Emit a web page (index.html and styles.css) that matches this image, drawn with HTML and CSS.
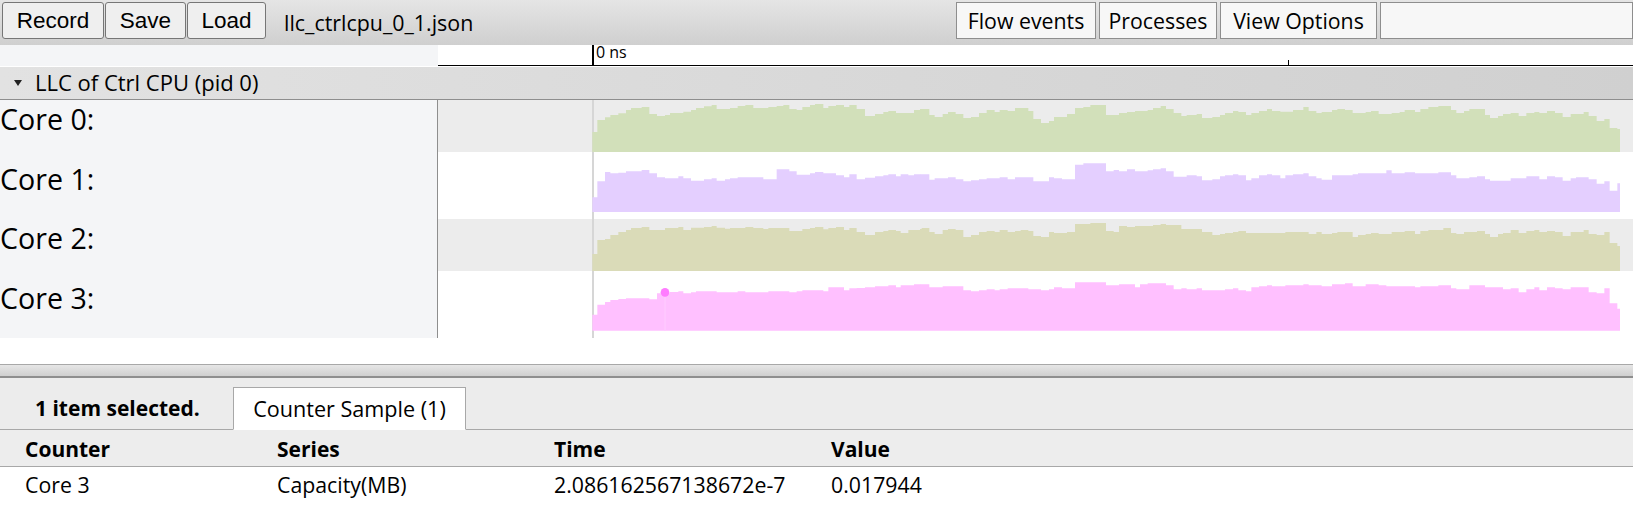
FILE: index.html
```html
<!DOCTYPE html>
<html lang="en">
<head>
<meta charset="utf-8">
<title>llc_ctrlcpu_0_1.json</title>
<link rel="stylesheet" href="styles.css">
</head>
<body>
<header class="toolbar">
  <div class="btn-group">
    <button class="btn">Record</button>
    <button class="btn btn-save">Save</button>
    <button class="btn btn-load">Load</button>
  </div>
  <span class="filename">llc_ctrlcpu_0_1.json</span>
  <div class="options">
    <button class="opt opt-flow">Flow events</button>
    <button class="opt opt-proc">Processes</button>
    <button class="opt opt-view">View Options</button>
    <div class="search"></div>
  </div>
</header>
<section class="ruler">
  <div class="ruler-side"></div>
  <div class="ruler-scale">
    <div class="ruler-zero"><span class="ruler-label">0 ns</span></div>
    <span class="ruler-tick"></span>
  </div>
</section>
<section class="process">
  <span class="triangle"></span>
  <span class="process-title">LLC of Ctrl CPU (pid 0)</span>
</section>
<section class="tracks">
  <div class="labels">
    <div class="label">Core 0:</div>
    <div class="label">Core 1:</div>
    <div class="label">Core 2:</div>
    <div class="label">Core 3:</div>
  </div>
  <div class="lanes">
    <div class="lane lane-a"></div>
    <div class="lane lane-b"></div>
    <div class="lane lane-c"></div>
    <div class="lane lane-d"></div>
    <span class="zero-line"></span>
    <svg class="charts" viewBox="0 0 3585 714" width="1195" height="238" aria-hidden="true">
      <g transform="translate(366 -30)">
        <g class="green">
          <path d="M97 186V126H112V90H135V82H151V75H175V70H198V60H213V54H245V51H268V72H291V78H315V75H330V69H370V65H393V60H408V54H432V49H455V45H470V57H510V54H533V48H556V45H580V54H625V51H650V48H670V45H688V57H710V60H727V51H750V45H765V42H790V54H805V48H828V45H852V51H868V45H890V57H915V78H945V72H970V66H985V63H1008V69H1062V60H1081V186Z"/>
          <path transform="translate(1080 0)" d="M0 186V57H28V75H44V81H68V72H84V66H107V72H130V84H153V81H177V69H200V60H224V66H239V60H263V63H285V54H325V63H340V87H363V99H387V93H402V81H441V72H465V54H490V51H511V45H558V75H597V69H621V66H645V63H683V60H699V54H722V48H738V57H761V69H784V78H800V75H830V72H846V84H877V81H900V75H915V69H939V63H955V66H978V75H994V69H1017V63H1041V57H1056V63H1081V186Z"/>
          <path transform="translate(2160 0)" d="M0 186V65H39V60H70V51H86V63H109V69H125V66H156V60H172V57H195V60H218V69H257V66H273V63H296V72H335V69H359V66H374V60H405V66H421V57H445V51H475V48H513V60H529V69H552V63H568V57H615V75H630V84H654V78H669V72H692V69H716V78H739V69H763V66H778V69H801V63H825V69H848V81H872V72H911V66H926V78H950V93H973V87H989V114H1012V117H1020V186Z"/>
        </g>
        <g class="purple">
          <path d="M97 366V322H112V274H135V246H151V250H175V248H198V244H245V240H268V250H291V262H315V265H355V259H370V265H393V272H432V268H455V265H470V272H495V268H510V265H533V262H610V268H650V238H688V244H710V254H750V250H765V246H790V250H828V256H852V262H868V253H890V268H915V263H945V259H970V256H985V253H1008V259H1022V253H1045V256H1062V253H1081V366Z"/>
          <path transform="translate(1080 0)" d="M0 366V253H28V269H44V265H84V262H107V268H130V274H153V271H177V268H200V265H239V262H263V268H285V262H340V274H387V262H402V265H426V268H465V224H490V220H558V244H581V240H597V244H621V238H645V244H683V241H699V238H722V235H738V244H761V260H800V256H830V259H846V271H877V268H900V259H915V256H939V253H955V256H978V271H994V265H1017V256H1041V253H1056V256H1081V366Z"/>
          <path transform="translate(2160 0)" d="M0 366V265H16V256H39V253H70V250H86V259H109V265H125V269H156V256H218V253H234V250H319V241H335V250H374V247H405V250H475V247H513V256H529V265H568V262H591V259H615V268H630V272H692V265H739V259H778V268H801V259H825V262H848V272H872V265H888V262H926V268H950V281H973V274H989V302H1012V280H1020V366Z"/>
        </g>
        <g class="olive" transform="translate(0 360)">
          <path d="M97 183V132H112V90H135V87H151V75H175V66H198V60H213V54H245V51H268V60H315V54H355V51H370V60H393V53H432V51H455V48H470V53H495V56H510V54H556V51H580V54H610V57H625V54H688V63H727V57H750V54H765V51H790V58H805V54H828V51H852V60H868V54H890V66H915V75H945V66H970V63H985V60H1008V63H1022V69H1045V60H1081V183Z"/>
          <path transform="translate(1080 0)" d="M0 183V57H5V54H28V66H44V72H68V60H84V57H107V60H130V81H153V75H177V66H200V63H224V66H239V60H263V66H285V63H302V60H325V63H340V78H363V81H387V66H402V69H441V66H465V42H511V39H558V63H581V66H597V48H621V51H645V48H699V45H722V42H738V45H784V57H846V66H877V75H900V72H915V69H939V66H955V63H978V69H1081V183Z"/>
          <path transform="translate(2160 0)" d="M0 183V69H16V66H86V72H109V66H125V72H156V69H172V66H218V81H234V75H257V72H273V69H296V72H335V66H374V63H405V72H421V63H445V60H490V54H513V69H529V72H552V66H591V63H615V72H630V81H654V72H669V69H692V60H716V69H739V63H763V60H778V66H801V63H825V66H848V78H872V66H911V60H926V72H950V75H973V66H989V99H1012V108H1020V183Z"/>
        </g>
        <g class="pink" transform="translate(0 360)">
          <path d="M97 362V314H112V284H135V276H151V270H175V267H198V265H268V268H291V250H330V246H355V244H370V250H393V247H408V244H470V247H533V244H556V247H625V244H688V247H710V244H727V241H790V244H805V232H852V241H868V235H890V234H915V232H945V229H985V226H1008V232H1022V226H1062V223H1081V362Z"/>
          <path transform="translate(1080 0)" d="M0 362V223H28V232H68V229H130V241H153V244H177V241H200V238H224V241H239V238H263V235H325V238H363V241H387V238H402V232H426V235H465V217H558V226H597V223H645V232H660V223H683V220H738V226H761V238H784V235H800V238H830V235H846V241H915V238H939V235H955V241H978V244H994V232H1017V229H1041V226H1056V229H1081V362Z"/>
          <path transform="translate(2160 0)" d="M0 362V229H16V226H70V223H86V226H125V229H156V223H195V220H218V229H257V223H296V226H319V229H405V232H421V229H475V226H513V235H529V238H568V226H615V232H669V238H692V235H716V247H739V238H763V232H778V241H801V232H825V235H848V238H872V232H926V247H950V250H973V235H989V280H1012V296H1020V362Z"/>
          <path class="stem" d="M313 260H317V362H313Z"/>
          <circle class="dot" cx="315" cy="247" r="13"/>
        </g>
      </g>
    </svg>
  </div>
</section>
<div class="spacer"></div>
<div class="drag-handle"></div>
<section class="panel">
  <div class="panel-tabs">
    <strong class="selected">1 item selected.</strong>
    <div class="tab">Counter Sample (1)</div>
  </div>
  <div class="table-head">
    <span class="col col-counter">Counter</span>
    <span class="col col-series">Series</span>
    <span class="col col-time">Time</span>
    <span class="col col-value">Value</span>
  </div>
  <div class="table-row">
    <span class="col col-counter">Core 3</span>
    <span class="col col-series">Capacity(MB)</span>
    <span class="col col-time">2.086162567138672e-7</span>
    <span class="col col-value">0.017944</span>
  </div>
</section>
</body>
</html>
```

FILE: styles.css
```css
* { box-sizing: border-box; }
html, body { margin: 0; height: 513px; overflow: hidden; background: #fff; }
body { font-family: "Open Sans", "Noto Sans", sans-serif; color: #000; }

.toolbar {
  display: flex;
  align-items: flex-start;
  height: 45px;
  padding-top: 2px;
  background: linear-gradient(#e5e5e5, #cfcfcf);
}
.btn-group { display: flex; margin-left: 2px; }
.btn {
  height: 37px;
  width: 80px;
  padding: 1px 0 0;
  font: 22.5px/1 "Liberation Sans", sans-serif;
  color: #000;
  background: #efefef;
  border: 1px solid #767676;
  border-radius: 3px;
  margin-right: 1px;
}
.btn:first-child { width: 102px; }
.btn-save { width: 81px; }
.btn-load { width: 79px; }
.filename { margin-left: 17px; font-size: 21.4px; line-height: 41px; }
.options { display: flex; margin-left: auto; gap: 3px; width: 677px; }
.opt {
  height: 37px;
  padding: 0;
  font: 21.3px/1 "Open Sans", sans-serif;
  color: #000;
  background: #f7f7f7;
  border: 1px solid #8e8e8e;
}
.opt-flow { width: 140px; }
.opt-proc { width: 118px; }
.opt-view { width: 157px; }
.search { flex: 1; height: 37px; background: #f7f7f7; border: 1px solid #8e8e8e; }

.ruler { display: flex; height: 22px; }
.ruler-side { width: 438px; height: 21px; background: #f4f5f7; }
.ruler-scale { position: relative; flex: 1; height: 21px; display: flex; border-bottom: 1px solid #000; padding-left: 154px; }
.ruler-zero { border-left: 2px solid #000; padding-left: 2px; }
.ruler-label { display: block; font-size: 16px; line-height: 14px; }
.ruler-tick { position: absolute; left: 850px; bottom: 0; width: 1px; height: 5px; background: #000; }

.process {
  display: flex;
  align-items: center;
  height: 33px;
  background: linear-gradient(90deg, #e2e2e2, #d0d0d0);
  border-bottom: 1px solid #8e8e8e;
}
.triangle {
  width: 0; height: 0;
  margin-left: 14px;
  border-left: 4px solid transparent;
  border-right: 4px solid transparent;
  border-top: 6px solid #222;
}
.process-title { margin-left: 13px; font-size: 22px; line-height: 28px; margin-bottom: 2px; }

.tracks { display: flex; height: 238px; }
.labels { width: 438px; background: #f4f5f7; border-right: 1px solid #8e8e8e; display: grid; grid-auto-rows: 59.5px; }
.label { font-size: 28.6px; line-height: 38px; }
.lanes { position: relative; flex: 1; }
.lane-a, .lane-c { height: 52px; background: #ececec; }
.lane-b, .lane-d { height: 67px; background: #fff; }
.charts { position: absolute; left: 0; top: 0; }
.green { fill: #d2e0ba; }
.purple { fill: #e4cfff; }
.olive { fill: #dadbb8; }
.pink { fill: #ffc0ff; }
.stem { fill: #ffcaff; }
.dot { fill: #ff7cff; }
.zero-line { position: absolute; left: 154px; top: 0; bottom: 0; width: 2px; background: #d6d6d6; }

.spacer { height: 26px; }
.drag-handle {
  height: 14px;
  background: linear-gradient(#e6e6e6, #cfcfcf);
  border-top: 1px solid #a8a8a8;
  border-bottom: 2px solid #8e8e8e;
}
.panel { background: #fff; }
.panel-tabs {
  display: flex;
  align-items: flex-end;
  height: 52px;
  background: #ececec;
  border-bottom: 1px solid #a8a8a8;
}
.selected { width: 233px; padding-left: 35px; font-size: 21px; line-height: 42px; }
.tab {
  width: 233px;
  height: 43px;
  margin-bottom: -1px;
  text-align: center;
  font-size: 21.6px;
  line-height: 41px;
  background: #fff;
  border: 1px solid #a8a8a8;
  border-bottom: 1px solid #fff;
}
.table-head, .table-row { display: flex; padding-left: 25px; font-size: 21.3px; }
.table-head { height: 37px; line-height: 38px; font-weight: 700; font-size: 21px; background: #ededed; border-bottom: 1px solid #a8a8a8; }
.table-row { height: 36px; line-height: 35px; }
.col-counter { width: 252px; }
.col-series { width: 277px; }
.col-time { width: 277px; }
```
